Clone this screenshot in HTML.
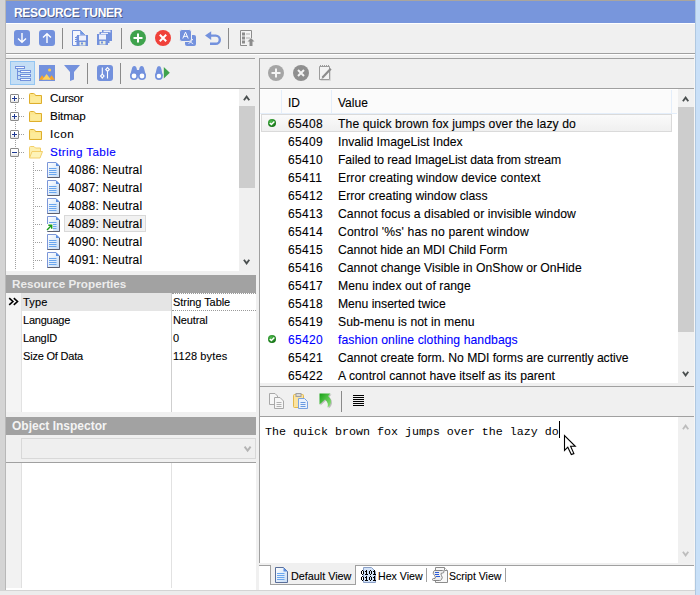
<!DOCTYPE html>
<html><head><meta charset="utf-8">
<style>
*{margin:0;padding:0;box-sizing:border-box}
html,body{width:700px;height:595px;overflow:hidden;background:#f0f0f0;font-family:"Liberation Sans",sans-serif;font-size:12px;color:#000}
.a{position:absolute}
.t{position:absolute;white-space:nowrap;line-height:1;-webkit-text-stroke:0.1px currentColor}
svg{position:absolute;overflow:visible}
</style></head><body>

<!-- frame -->
<div class="a" style="left:0;top:0;width:700px;height:1px;background:#aaa59d"></div>
<div class="a" style="left:0;top:0;width:5px;height:590px;background:#d4d4d4"></div>
<div class="a" style="left:5px;top:0;width:1px;height:590px;background:#b8b8b8"></div>
<div class="a" style="left:695px;top:0;width:5px;height:595px;background:#c9e0f8"></div>
<div class="a" style="left:695px;top:0;width:1px;height:595px;background:#b0c8e0"></div>

<!-- title bar -->
<div class="a" style="left:6px;top:1px;width:689px;height:22px;background:#7896dc"></div>
<div class="a" style="left:6px;top:23px;width:689px;height:1px;background:#fff"></div>
<div class="t" style="left:14px;top:7px;font-weight:bold;-webkit-text-stroke:0;font-size:12px;letter-spacing:-0.33px;color:#fff;text-shadow:1px 1px 0 rgba(40,40,60,.55)">RESOURCE TUNER</div>

<!-- main toolbar lines -->
<div class="a" style="left:6px;top:53px;width:689px;height:1px;background:#a0a0a0"></div>
<div class="a" style="left:6px;top:54px;width:689px;height:1px;background:#fff"></div>
<div class="a" style="left:6px;top:58px;width:249px;height:1px;background:#a0a0a0"></div>
<div class="a" style="left:259px;top:58px;width:436px;height:1px;background:#a0a0a0"></div>


<!-- main toolbar icons -->
<svg style="left:14px;top:30px" width="16" height="16" viewBox="0 0 16 16"><rect x="0" y="0" width="16" height="16" rx="3" fill="#7391dd"/><path d="M8 3V12M4 8.5L8 12.3L12 8.5" stroke="#fff" stroke-width="1.4" fill="none"/></svg>
<svg style="left:39px;top:30px" width="16" height="16" viewBox="0 0 16 16"><rect x="0" y="0" width="16" height="16" rx="3" fill="#7391dd"/><path d="M8 13V4M4 7.5L8 3.7L12 7.5" stroke="#fff" stroke-width="1.4" fill="none"/></svg>
<div class="a" style="left:62px;top:28px;width:1px;height:21px;background:#8a8a8a"></div>
<svg style="left:72px;top:30px" width="16" height="16" viewBox="0 0 16 16">
 <path d="M0.5 0.5H8.5L12.5 4.5V6H5V15.5H0.5Z" fill="#f4f6fd" stroke="#7391dd"/>
 <path d="M8.5 0.5V4.5H12.5Z" fill="#6f9be6" stroke="#7391dd" stroke-width=".6"/>
 <path d="M3 7.5H5M3 9.5H5M3 11.5H5" stroke="#7391dd"/>
 <rect x="5" y="5" width="11" height="11" fill="#7391dd"/>
 <rect x="7" y="5.5" width="7" height="5" fill="#eef0fb"/>
 <rect x="7.5" y="12" width="6" height="3.5" fill="#e8ece0"/>
 <rect x="9" y="12.5" width="2" height="2" fill="#7391dd"/>
</svg>
<svg style="left:97px;top:30px" width="16" height="16" viewBox="0 0 16 16">
 <rect x="5" y="0" width="10" height="11" fill="#7391dd"/>
 <rect x="6.5" y="0.5" width="7" height="2" fill="#eef0fb"/>
 <rect x="2.5" y="2" width="10" height="11" fill="#7391dd"/>
 <rect x="4" y="2.8" width="7" height="2" fill="#eef0fb"/>
 <rect x="0" y="4" width="11" height="11" fill="#7391dd"/>
 <rect x="2" y="4.5" width="7" height="5" fill="#eef0fb"/>
 <rect x="2.5" y="11" width="6" height="3.5" fill="#e8ece0"/>
 <rect x="4" y="11.5" width="2" height="2" fill="#7391dd"/>
</svg>
<div class="a" style="left:121px;top:28px;width:1px;height:21px;background:#8a8a8a"></div>
<svg style="left:130px;top:30px" width="16" height="16" viewBox="0 0 16 16"><circle cx="8" cy="8" r="8" fill="#3fa34d"/><path d="M8 3.5V12.5M3.5 8H12.5" stroke="#fff" stroke-width="2"/></svg>
<svg style="left:155px;top:30px" width="16" height="16" viewBox="0 0 16 16"><circle cx="8" cy="8" r="8" fill="#f0413a"/><path d="M4.8 4.8L11.2 11.2M11.2 4.8L4.8 11.2" stroke="#fff" stroke-width="2"/></svg>
<svg style="left:180px;top:30px" width="16" height="16" viewBox="0 0 16 16">
 <rect x="5" y="5" width="11" height="11" rx="2" fill="#7391dd"/>
 <path d="M8.5 9.5H13M10.8 8.5V9.5M12.2 9.5Q11.5 12.5 8.5 13.5M9.8 11Q11 13 13.2 13.8" stroke="#eef0fb" stroke-width=".9" fill="none"/>
 <rect x="-0.5" y="-0.5" width="12" height="12" rx="2.5" fill="#7391dd" stroke="#f0f0f0" stroke-width="1"/>
 <path d="M2.8 8.5L5.5 2.2L8.2 8.5M3.8 6.3H7.2" stroke="#fff" stroke-width="1" fill="none"/>
</svg>
<svg style="left:205px;top:31px" width="16" height="15" viewBox="0 0 16 15">
 <path d="M5 4.6H10.7A4.1 4.1 0 0 1 10.7 12.8H5" stroke="#7391dd" stroke-width="2.4" fill="none"/>
 <path d="M0 4.6L6.2 0.2V9Z" fill="#7391dd"/>
</svg>
<div class="a" style="left:228px;top:28px;width:1px;height:21px;background:#8a8a8a"></div>
<svg style="left:240px;top:30px" width="15" height="16" viewBox="0 0 15 16">
 <path d="M0.5 0.5H11.5V8M7 15.5H0.5V0.5" stroke="#8c8c8c" fill="#f4f4f4"/>
 <rect x="2" y="2.5" width="3" height="3" fill="#8c8c8c"/>
 <rect x="2" y="6.5" width="3" height="3" fill="#8c8c8c"/>
 <rect x="2" y="10.5" width="3" height="3" fill="#8c8c8c"/>
 <path d="M6 4H10M6 8H10" stroke="#b0b0b0"/>
 <path d="M7.5 11.5L11 8L14.5 11.5H12.5V16H9.5V11.5Z" fill="#8c8c8c"/>
</svg>

<!-- LEFT PANEL toolbar 2 -->
<div class="a" style="left:10px;top:61px;width:25px;height:24px;background:#c4def5;border:1px solid #94c6f2"></div>
<svg style="left:15px;top:65px" width="16" height="16" viewBox="0 0 16 16">
 <rect x="0.5" y="1.5" width="9" height="2" fill="#f4f8ff" stroke="#7391dd"/>
 <path d="M2.5 4V14.5M2.5 6.5H5M2.5 10.5H5M2.5 14.5H5" stroke="#7391dd"/>
 <rect x="5.5" y="5.5" width="10" height="2" fill="#f4f8ff" stroke="#7391dd"/>
 <rect x="5.5" y="9.5" width="10" height="2" fill="#f4f8ff" stroke="#7391dd"/>
 <rect x="5.5" y="13.5" width="10" height="2" fill="#f4f8ff" stroke="#7391dd"/>
</svg>
<svg style="left:39px;top:65px" width="16" height="16" viewBox="0 0 16 16">
 <rect x="0" y="0" width="16" height="16" fill="#7391dd"/>
 <circle cx="10.6" cy="5" r="1.6" fill="#fdc94a"/>
 <path d="M0 14.8L3 10.2L6.5 14.8Z M9 14.8L12.6 10.2L16 14.8Z" fill="#f6a42a"/>
 <path d="M3.2 14.8L7.6 9L12 14.8Z" fill="#fdd25c"/>
</svg>
<svg style="left:64px;top:65px" width="16" height="16" viewBox="0 0 16 16">
 <path d="M0 0H16L10 7V14.5L6 16V7Z" fill="#7391dd"/>
</svg>
<div class="a" style="left:87px;top:63px;width:1px;height:21px;background:#8a8a8a"></div>
<svg style="left:97px;top:65px" width="16" height="16" viewBox="0 0 16 16">
 <rect x="0" y="0" width="16" height="16" rx="3" fill="#7391dd"/>
 <path d="M5.3 2.5V9.2M5.3 12.8V13.5M10.5 2.5V2.8M10.5 6.3V13.5" stroke="#fff" stroke-width="1.1"/>
 <path d="M5.3 9.1L7.1 11L5.3 12.9L3.5 11Z" fill="none" stroke="#fff" stroke-width="1.1"/>
 <path d="M10.5 2.6L12.3 4.5L10.5 6.4L8.7 4.5Z" fill="none" stroke="#fff" stroke-width="1.1"/>
</svg>
<div class="a" style="left:120px;top:63px;width:1px;height:21px;background:#8a8a8a"></div>
<svg style="left:130px;top:65px" width="16" height="16" viewBox="0 0 16 16">
 <path d="M1.8 4Q2.3 1 4.3 1Q6.3 1 6.8 4L8 11H0Z" fill="#7391dd"/>
 <path d="M14.2 4Q13.7 1 11.7 1Q9.7 1 9.2 4L8 11H16Z" fill="#7391dd"/>
 <rect x="6" y="5" width="4" height="6" fill="#7391dd"/>
 <circle cx="4" cy="11" r="4" fill="#7391dd"/><circle cx="12" cy="11" r="4" fill="#7391dd"/>
 <circle cx="4" cy="11" r="2.4" fill="#fff"/><circle cx="12" cy="11" r="2.4" fill="#fff"/>
</svg>
<svg style="left:155px;top:65px" width="16" height="16" viewBox="0 0 16 16">
 <path d="M1.6 4Q2.1 1 4 1Q5.9 1 6.4 4L7.8 11H0Z" fill="#7391dd"/>
 <circle cx="3.9" cy="11" r="3.9" fill="#7391dd"/>
 <circle cx="3.9" cy="11" r="2.3" fill="#fff"/>
 <path d="M8.8 2L14.8 7.7L8.8 13.4Z" fill="#3fa34d"/>
</svg>
<div class="a" style="left:6px;top:88px;width:249px;height:1px;background:#a0a0a0"></div>

<!-- TREE -->
<div class="a" style="left:6px;top:89px;width:249px;height:182px;background:#fff;overflow:hidden" id="tree"><div class="a" style="left:-6px;top:-89px;width:700px;height:595px"><div class="a" style="left:15px;top:104px;width:1px;height:1px;background:#a0a0a0"></div><div class="a" style="left:15px;top:106px;width:1px;height:1px;background:#a0a0a0"></div><div class="a" style="left:15px;top:108px;width:1px;height:1px;background:#a0a0a0"></div><div class="a" style="left:15px;top:110px;width:1px;height:1px;background:#a0a0a0"></div><div class="a" style="left:15px;top:112px;width:1px;height:1px;background:#a0a0a0"></div><div class="a" style="left:15px;top:114px;width:1px;height:1px;background:#a0a0a0"></div><div class="a" style="left:15px;top:116px;width:1px;height:1px;background:#a0a0a0"></div><div class="a" style="left:15px;top:118px;width:1px;height:1px;background:#a0a0a0"></div><div class="a" style="left:15px;top:120px;width:1px;height:1px;background:#a0a0a0"></div><div class="a" style="left:15px;top:122px;width:1px;height:1px;background:#a0a0a0"></div><div class="a" style="left:15px;top:124px;width:1px;height:1px;background:#a0a0a0"></div><div class="a" style="left:15px;top:126px;width:1px;height:1px;background:#a0a0a0"></div><div class="a" style="left:15px;top:128px;width:1px;height:1px;background:#a0a0a0"></div><div class="a" style="left:15px;top:130px;width:1px;height:1px;background:#a0a0a0"></div><div class="a" style="left:15px;top:132px;width:1px;height:1px;background:#a0a0a0"></div><div class="a" style="left:15px;top:134px;width:1px;height:1px;background:#a0a0a0"></div><div class="a" style="left:15px;top:136px;width:1px;height:1px;background:#a0a0a0"></div><div class="a" style="left:15px;top:138px;width:1px;height:1px;background:#a0a0a0"></div><div class="a" style="left:15px;top:140px;width:1px;height:1px;background:#a0a0a0"></div><div class="a" style="left:15px;top:142px;width:1px;height:1px;background:#a0a0a0"></div><div class="a" style="left:15px;top:144px;width:1px;height:1px;background:#a0a0a0"></div><div class="a" style="left:15px;top:146px;width:1px;height:1px;background:#a0a0a0"></div><div class="a" style="left:15px;top:148px;width:1px;height:1px;background:#a0a0a0"></div><div class="a" style="left:15px;top:150px;width:1px;height:1px;background:#a0a0a0"></div><div class="a" style="left:15px;top:152px;width:1px;height:1px;background:#a0a0a0"></div><div class="a" style="left:15px;top:154px;width:1px;height:1px;background:#a0a0a0"></div><div class="a" style="left:15px;top:156px;width:1px;height:1px;background:#a0a0a0"></div><div class="a" style="left:15px;top:158px;width:1px;height:1px;background:#a0a0a0"></div><div class="a" style="left:15px;top:160px;width:1px;height:1px;background:#a0a0a0"></div><div class="a" style="left:15px;top:162px;width:1px;height:1px;background:#a0a0a0"></div><div class="a" style="left:15px;top:164px;width:1px;height:1px;background:#a0a0a0"></div><div class="a" style="left:15px;top:166px;width:1px;height:1px;background:#a0a0a0"></div><div class="a" style="left:15px;top:168px;width:1px;height:1px;background:#a0a0a0"></div><div class="a" style="left:15px;top:170px;width:1px;height:1px;background:#a0a0a0"></div><div class="a" style="left:15px;top:172px;width:1px;height:1px;background:#a0a0a0"></div><div class="a" style="left:15px;top:174px;width:1px;height:1px;background:#a0a0a0"></div><div class="a" style="left:15px;top:176px;width:1px;height:1px;background:#a0a0a0"></div><div class="a" style="left:15px;top:178px;width:1px;height:1px;background:#a0a0a0"></div><div class="a" style="left:15px;top:180px;width:1px;height:1px;background:#a0a0a0"></div><div class="a" style="left:15px;top:182px;width:1px;height:1px;background:#a0a0a0"></div><div class="a" style="left:15px;top:184px;width:1px;height:1px;background:#a0a0a0"></div><div class="a" style="left:15px;top:186px;width:1px;height:1px;background:#a0a0a0"></div><div class="a" style="left:15px;top:188px;width:1px;height:1px;background:#a0a0a0"></div><div class="a" style="left:15px;top:190px;width:1px;height:1px;background:#a0a0a0"></div><div class="a" style="left:15px;top:192px;width:1px;height:1px;background:#a0a0a0"></div><div class="a" style="left:15px;top:194px;width:1px;height:1px;background:#a0a0a0"></div><div class="a" style="left:15px;top:196px;width:1px;height:1px;background:#a0a0a0"></div><div class="a" style="left:15px;top:198px;width:1px;height:1px;background:#a0a0a0"></div><div class="a" style="left:15px;top:200px;width:1px;height:1px;background:#a0a0a0"></div><div class="a" style="left:15px;top:202px;width:1px;height:1px;background:#a0a0a0"></div><div class="a" style="left:15px;top:204px;width:1px;height:1px;background:#a0a0a0"></div><div class="a" style="left:15px;top:206px;width:1px;height:1px;background:#a0a0a0"></div><div class="a" style="left:15px;top:208px;width:1px;height:1px;background:#a0a0a0"></div><div class="a" style="left:15px;top:210px;width:1px;height:1px;background:#a0a0a0"></div><div class="a" style="left:15px;top:212px;width:1px;height:1px;background:#a0a0a0"></div><div class="a" style="left:15px;top:214px;width:1px;height:1px;background:#a0a0a0"></div><div class="a" style="left:15px;top:216px;width:1px;height:1px;background:#a0a0a0"></div><div class="a" style="left:15px;top:218px;width:1px;height:1px;background:#a0a0a0"></div><div class="a" style="left:15px;top:220px;width:1px;height:1px;background:#a0a0a0"></div><div class="a" style="left:15px;top:222px;width:1px;height:1px;background:#a0a0a0"></div><div class="a" style="left:15px;top:224px;width:1px;height:1px;background:#a0a0a0"></div><div class="a" style="left:15px;top:226px;width:1px;height:1px;background:#a0a0a0"></div><div class="a" style="left:15px;top:228px;width:1px;height:1px;background:#a0a0a0"></div><div class="a" style="left:15px;top:230px;width:1px;height:1px;background:#a0a0a0"></div><div class="a" style="left:15px;top:232px;width:1px;height:1px;background:#a0a0a0"></div><div class="a" style="left:15px;top:234px;width:1px;height:1px;background:#a0a0a0"></div><div class="a" style="left:15px;top:236px;width:1px;height:1px;background:#a0a0a0"></div><div class="a" style="left:15px;top:238px;width:1px;height:1px;background:#a0a0a0"></div><div class="a" style="left:15px;top:240px;width:1px;height:1px;background:#a0a0a0"></div><div class="a" style="left:15px;top:242px;width:1px;height:1px;background:#a0a0a0"></div><div class="a" style="left:15px;top:244px;width:1px;height:1px;background:#a0a0a0"></div><div class="a" style="left:15px;top:246px;width:1px;height:1px;background:#a0a0a0"></div><div class="a" style="left:15px;top:248px;width:1px;height:1px;background:#a0a0a0"></div><div class="a" style="left:15px;top:250px;width:1px;height:1px;background:#a0a0a0"></div><div class="a" style="left:15px;top:252px;width:1px;height:1px;background:#a0a0a0"></div><div class="a" style="left:15px;top:254px;width:1px;height:1px;background:#a0a0a0"></div><div class="a" style="left:15px;top:256px;width:1px;height:1px;background:#a0a0a0"></div><div class="a" style="left:15px;top:258px;width:1px;height:1px;background:#a0a0a0"></div><div class="a" style="left:15px;top:260px;width:1px;height:1px;background:#a0a0a0"></div><div class="a" style="left:15px;top:262px;width:1px;height:1px;background:#a0a0a0"></div><div class="a" style="left:15px;top:264px;width:1px;height:1px;background:#a0a0a0"></div><div class="a" style="left:15px;top:266px;width:1px;height:1px;background:#a0a0a0"></div><div class="a" style="left:15px;top:268px;width:1px;height:1px;background:#a0a0a0"></div><div class="a" style="left:33px;top:162px;width:1px;height:1px;background:#a0a0a0"></div><div class="a" style="left:33px;top:164px;width:1px;height:1px;background:#a0a0a0"></div><div class="a" style="left:33px;top:166px;width:1px;height:1px;background:#a0a0a0"></div><div class="a" style="left:33px;top:168px;width:1px;height:1px;background:#a0a0a0"></div><div class="a" style="left:33px;top:170px;width:1px;height:1px;background:#a0a0a0"></div><div class="a" style="left:33px;top:172px;width:1px;height:1px;background:#a0a0a0"></div><div class="a" style="left:33px;top:174px;width:1px;height:1px;background:#a0a0a0"></div><div class="a" style="left:33px;top:176px;width:1px;height:1px;background:#a0a0a0"></div><div class="a" style="left:33px;top:178px;width:1px;height:1px;background:#a0a0a0"></div><div class="a" style="left:33px;top:180px;width:1px;height:1px;background:#a0a0a0"></div><div class="a" style="left:33px;top:182px;width:1px;height:1px;background:#a0a0a0"></div><div class="a" style="left:33px;top:184px;width:1px;height:1px;background:#a0a0a0"></div><div class="a" style="left:33px;top:186px;width:1px;height:1px;background:#a0a0a0"></div><div class="a" style="left:33px;top:188px;width:1px;height:1px;background:#a0a0a0"></div><div class="a" style="left:33px;top:190px;width:1px;height:1px;background:#a0a0a0"></div><div class="a" style="left:33px;top:192px;width:1px;height:1px;background:#a0a0a0"></div><div class="a" style="left:33px;top:194px;width:1px;height:1px;background:#a0a0a0"></div><div class="a" style="left:33px;top:196px;width:1px;height:1px;background:#a0a0a0"></div><div class="a" style="left:33px;top:198px;width:1px;height:1px;background:#a0a0a0"></div><div class="a" style="left:33px;top:200px;width:1px;height:1px;background:#a0a0a0"></div><div class="a" style="left:33px;top:202px;width:1px;height:1px;background:#a0a0a0"></div><div class="a" style="left:33px;top:204px;width:1px;height:1px;background:#a0a0a0"></div><div class="a" style="left:33px;top:206px;width:1px;height:1px;background:#a0a0a0"></div><div class="a" style="left:33px;top:208px;width:1px;height:1px;background:#a0a0a0"></div><div class="a" style="left:33px;top:210px;width:1px;height:1px;background:#a0a0a0"></div><div class="a" style="left:33px;top:212px;width:1px;height:1px;background:#a0a0a0"></div><div class="a" style="left:33px;top:214px;width:1px;height:1px;background:#a0a0a0"></div><div class="a" style="left:33px;top:216px;width:1px;height:1px;background:#a0a0a0"></div><div class="a" style="left:33px;top:218px;width:1px;height:1px;background:#a0a0a0"></div><div class="a" style="left:33px;top:220px;width:1px;height:1px;background:#a0a0a0"></div><div class="a" style="left:33px;top:222px;width:1px;height:1px;background:#a0a0a0"></div><div class="a" style="left:33px;top:224px;width:1px;height:1px;background:#a0a0a0"></div><div class="a" style="left:33px;top:226px;width:1px;height:1px;background:#a0a0a0"></div><div class="a" style="left:33px;top:228px;width:1px;height:1px;background:#a0a0a0"></div><div class="a" style="left:33px;top:230px;width:1px;height:1px;background:#a0a0a0"></div><div class="a" style="left:33px;top:232px;width:1px;height:1px;background:#a0a0a0"></div><div class="a" style="left:33px;top:234px;width:1px;height:1px;background:#a0a0a0"></div><div class="a" style="left:33px;top:236px;width:1px;height:1px;background:#a0a0a0"></div><div class="a" style="left:33px;top:238px;width:1px;height:1px;background:#a0a0a0"></div><div class="a" style="left:33px;top:240px;width:1px;height:1px;background:#a0a0a0"></div><div class="a" style="left:33px;top:242px;width:1px;height:1px;background:#a0a0a0"></div><div class="a" style="left:33px;top:244px;width:1px;height:1px;background:#a0a0a0"></div><div class="a" style="left:33px;top:246px;width:1px;height:1px;background:#a0a0a0"></div><div class="a" style="left:33px;top:248px;width:1px;height:1px;background:#a0a0a0"></div><div class="a" style="left:33px;top:250px;width:1px;height:1px;background:#a0a0a0"></div><div class="a" style="left:33px;top:252px;width:1px;height:1px;background:#a0a0a0"></div><div class="a" style="left:33px;top:254px;width:1px;height:1px;background:#a0a0a0"></div><div class="a" style="left:33px;top:256px;width:1px;height:1px;background:#a0a0a0"></div><div class="a" style="left:33px;top:258px;width:1px;height:1px;background:#a0a0a0"></div><div class="a" style="left:33px;top:260px;width:1px;height:1px;background:#a0a0a0"></div><div class="a" style="left:33px;top:262px;width:1px;height:1px;background:#a0a0a0"></div><div class="a" style="left:33px;top:264px;width:1px;height:1px;background:#a0a0a0"></div><div class="a" style="left:33px;top:266px;width:1px;height:1px;background:#a0a0a0"></div><div class="a" style="left:33px;top:268px;width:1px;height:1px;background:#a0a0a0"></div><div class="a" style="left:10px;top:94px;width:9px;height:9px;border:1px solid #8a8a8a;border-radius:1px;background:linear-gradient(#fff 55%,#e2e2e2)"></div><div class="a" style="left:12px;top:98px;width:5px;height:1px;background:#1f3a93"></div><div class="a" style="left:14px;top:96px;width:1px;height:5px;background:#1f3a93"></div><div class="a" style="left:19px;top:98px;width:1px;height:1px;background:#a0a0a0"></div><div class="a" style="left:21px;top:98px;width:1px;height:1px;background:#a0a0a0"></div><div class="a" style="left:23px;top:98px;width:1px;height:1px;background:#a0a0a0"></div><svg style="left:29px;top:93px" width="13" height="11" viewBox="0 0 13 11"><path d="M0.5 10.5V1.5Q0.5 0.5 1.5 0.5H4.5Q5.5 0.5 6 1.5L6.5 2.5H12.5V10.5Z" fill="#fde68c" stroke="#deae2c"/><path d="M1.5 3.5H11.5V9.5H1.5Z" fill="#feefa8" opacity=".5"/></svg><div class="t" style="left:50px;top:92px;font-size:11.7px;letter-spacing:-0.28px;color:#000">Cursor</div><div class="a" style="left:10px;top:112px;width:9px;height:9px;border:1px solid #8a8a8a;border-radius:1px;background:linear-gradient(#fff 55%,#e2e2e2)"></div><div class="a" style="left:12px;top:116px;width:5px;height:1px;background:#1f3a93"></div><div class="a" style="left:14px;top:114px;width:1px;height:5px;background:#1f3a93"></div><div class="a" style="left:19px;top:116px;width:1px;height:1px;background:#a0a0a0"></div><div class="a" style="left:21px;top:116px;width:1px;height:1px;background:#a0a0a0"></div><div class="a" style="left:23px;top:116px;width:1px;height:1px;background:#a0a0a0"></div><svg style="left:29px;top:111px" width="13" height="11" viewBox="0 0 13 11"><path d="M0.5 10.5V1.5Q0.5 0.5 1.5 0.5H4.5Q5.5 0.5 6 1.5L6.5 2.5H12.5V10.5Z" fill="#fde68c" stroke="#deae2c"/><path d="M1.5 3.5H11.5V9.5H1.5Z" fill="#feefa8" opacity=".5"/></svg><div class="t" style="left:50px;top:110px;font-size:11.7px;letter-spacing:-0.14px;color:#000">Bitmap</div><div class="a" style="left:10px;top:130px;width:9px;height:9px;border:1px solid #8a8a8a;border-radius:1px;background:linear-gradient(#fff 55%,#e2e2e2)"></div><div class="a" style="left:12px;top:134px;width:5px;height:1px;background:#1f3a93"></div><div class="a" style="left:14px;top:132px;width:1px;height:5px;background:#1f3a93"></div><div class="a" style="left:19px;top:134px;width:1px;height:1px;background:#a0a0a0"></div><div class="a" style="left:21px;top:134px;width:1px;height:1px;background:#a0a0a0"></div><div class="a" style="left:23px;top:134px;width:1px;height:1px;background:#a0a0a0"></div><svg style="left:29px;top:129px" width="13" height="11" viewBox="0 0 13 11"><path d="M0.5 10.5V1.5Q0.5 0.5 1.5 0.5H4.5Q5.5 0.5 6 1.5L6.5 2.5H12.5V10.5Z" fill="#fde68c" stroke="#deae2c"/><path d="M1.5 3.5H11.5V9.5H1.5Z" fill="#feefa8" opacity=".5"/></svg><div class="t" style="left:50px;top:128px;font-size:11.7px;letter-spacing:0.53px;color:#000">Icon</div><div class="a" style="left:10px;top:148px;width:9px;height:9px;border:1px solid #8a8a8a;border-radius:1px;background:linear-gradient(#fff 55%,#e2e2e2)"></div><div class="a" style="left:12px;top:152px;width:5px;height:1px;background:#1f3a93"></div><div class="a" style="left:19px;top:152px;width:1px;height:1px;background:#a0a0a0"></div><div class="a" style="left:21px;top:152px;width:1px;height:1px;background:#a0a0a0"></div><div class="a" style="left:23px;top:152px;width:1px;height:1px;background:#a0a0a0"></div><svg style="left:29px;top:146px" width="14" height="13" viewBox="0 0 14 13"><path d="M0.5 12V1.5Q0.5 0.5 1.5 0.5H5L6.5 2H11.5V5" fill="#fdf0b0" stroke="#f3cf6a"/><path d="M0.5 12L3 5.5H13.5L11 12Z" fill="#fdf3b8" stroke="#f3cf6a"/></svg><div class="t" style="left:50px;top:146px;font-size:11.7px;letter-spacing:0.38px;color:#0000ff">String Table</div><div class="a" style="left:35px;top:170px;width:1px;height:1px;background:#a0a0a0"></div><div class="a" style="left:37px;top:170px;width:1px;height:1px;background:#a0a0a0"></div><div class="a" style="left:39px;top:170px;width:1px;height:1px;background:#a0a0a0"></div><div class="a" style="left:41px;top:170px;width:1px;height:1px;background:#a0a0a0"></div><svg style="left:47px;top:162px" width="14" height="16" viewBox="0 0 14 16"><defs><linearGradient id="dg4086" x1="0" y1="0" x2="1" y2="1"><stop offset="0" stop-color="#ffffff"/><stop offset="1" stop-color="#c6dcf6"/></linearGradient></defs><path d="M0.5 0.5H9L12.5 4V15.5H0.5Z" fill="url(#dg4086)" stroke="#7b96d8"/><path d="M12.5 4V15.5H0.5" stroke="#5c5f6e" fill="none"/><path d="M9 0.5V4H12.5Z" fill="#5b8ee0"/><path d="M2 6.5H9.5M2 8.5H9.5M2 10.5H9.5M2 12.5H9.5" stroke="#6aa6ee" stroke-width="1"/></svg><div class="t" style="left:68px;top:164px;font-size:12px;letter-spacing:0.17px">4086: Neutral</div><div class="a" style="left:35px;top:188px;width:1px;height:1px;background:#a0a0a0"></div><div class="a" style="left:37px;top:188px;width:1px;height:1px;background:#a0a0a0"></div><div class="a" style="left:39px;top:188px;width:1px;height:1px;background:#a0a0a0"></div><div class="a" style="left:41px;top:188px;width:1px;height:1px;background:#a0a0a0"></div><svg style="left:47px;top:180px" width="14" height="16" viewBox="0 0 14 16"><defs><linearGradient id="dg4087" x1="0" y1="0" x2="1" y2="1"><stop offset="0" stop-color="#ffffff"/><stop offset="1" stop-color="#c6dcf6"/></linearGradient></defs><path d="M0.5 0.5H9L12.5 4V15.5H0.5Z" fill="url(#dg4087)" stroke="#7b96d8"/><path d="M12.5 4V15.5H0.5" stroke="#5c5f6e" fill="none"/><path d="M9 0.5V4H12.5Z" fill="#5b8ee0"/><path d="M2 6.5H9.5M2 8.5H9.5M2 10.5H9.5M2 12.5H9.5" stroke="#6aa6ee" stroke-width="1"/></svg><div class="t" style="left:68px;top:182px;font-size:12px;letter-spacing:0.17px">4087: Neutral</div><div class="a" style="left:35px;top:206px;width:1px;height:1px;background:#a0a0a0"></div><div class="a" style="left:37px;top:206px;width:1px;height:1px;background:#a0a0a0"></div><div class="a" style="left:39px;top:206px;width:1px;height:1px;background:#a0a0a0"></div><div class="a" style="left:41px;top:206px;width:1px;height:1px;background:#a0a0a0"></div><svg style="left:47px;top:198px" width="14" height="16" viewBox="0 0 14 16"><defs><linearGradient id="dg4088" x1="0" y1="0" x2="1" y2="1"><stop offset="0" stop-color="#ffffff"/><stop offset="1" stop-color="#c6dcf6"/></linearGradient></defs><path d="M0.5 0.5H9L12.5 4V15.5H0.5Z" fill="url(#dg4088)" stroke="#7b96d8"/><path d="M12.5 4V15.5H0.5" stroke="#5c5f6e" fill="none"/><path d="M9 0.5V4H12.5Z" fill="#5b8ee0"/><path d="M2 6.5H9.5M2 8.5H9.5M2 10.5H9.5M2 12.5H9.5" stroke="#6aa6ee" stroke-width="1"/></svg><div class="t" style="left:68px;top:200px;font-size:12px;letter-spacing:0.17px">4088: Neutral</div><div class="a" style="left:35px;top:224px;width:1px;height:1px;background:#a0a0a0"></div><div class="a" style="left:37px;top:224px;width:1px;height:1px;background:#a0a0a0"></div><div class="a" style="left:39px;top:224px;width:1px;height:1px;background:#a0a0a0"></div><div class="a" style="left:41px;top:224px;width:1px;height:1px;background:#a0a0a0"></div><svg style="left:47px;top:216px" width="14" height="16" viewBox="0 0 14 16"><defs><linearGradient id="dg4089" x1="0" y1="0" x2="1" y2="1"><stop offset="0" stop-color="#ffffff"/><stop offset="1" stop-color="#c6dcf6"/></linearGradient></defs><path d="M0.5 0.5H9L12.5 4V15.5H0.5Z" fill="url(#dg4089)" stroke="#7b96d8"/><path d="M12.5 4V15.5H0.5" stroke="#5c5f6e" fill="none"/><path d="M9 0.5V4H12.5Z" fill="#5b8ee0"/><path d="M2 6.5H9.5M2 8.5H9.5M2 10.5H9.5M2 12.5H9.5" stroke="#6aa6ee" stroke-width="1"/></svg><div class="a" style="left:64px;top:215px;width:82px;height:17px;background:#f2f2f2;border:1px solid #d9d9d9"></div><svg style="left:46px;top:224px" width="7" height="7" viewBox="0 0 7 7"><rect x="0" y="0" width="7" height="7" fill="#fff"/><path d="M1 6L5.2 1.8M2.3 1.3H5.7V4.7" stroke="#1a9a1a" stroke-width="1.4" fill="none"/></svg><div class="t" style="left:68px;top:218px;font-size:12px;letter-spacing:0.17px">4089: Neutral</div><div class="a" style="left:35px;top:242px;width:1px;height:1px;background:#a0a0a0"></div><div class="a" style="left:37px;top:242px;width:1px;height:1px;background:#a0a0a0"></div><div class="a" style="left:39px;top:242px;width:1px;height:1px;background:#a0a0a0"></div><div class="a" style="left:41px;top:242px;width:1px;height:1px;background:#a0a0a0"></div><svg style="left:47px;top:234px" width="14" height="16" viewBox="0 0 14 16"><defs><linearGradient id="dg4090" x1="0" y1="0" x2="1" y2="1"><stop offset="0" stop-color="#ffffff"/><stop offset="1" stop-color="#c6dcf6"/></linearGradient></defs><path d="M0.5 0.5H9L12.5 4V15.5H0.5Z" fill="url(#dg4090)" stroke="#7b96d8"/><path d="M12.5 4V15.5H0.5" stroke="#5c5f6e" fill="none"/><path d="M9 0.5V4H12.5Z" fill="#5b8ee0"/><path d="M2 6.5H9.5M2 8.5H9.5M2 10.5H9.5M2 12.5H9.5" stroke="#6aa6ee" stroke-width="1"/></svg><div class="t" style="left:68px;top:236px;font-size:12px;letter-spacing:0.17px">4090: Neutral</div><div class="a" style="left:35px;top:260px;width:1px;height:1px;background:#a0a0a0"></div><div class="a" style="left:37px;top:260px;width:1px;height:1px;background:#a0a0a0"></div><div class="a" style="left:39px;top:260px;width:1px;height:1px;background:#a0a0a0"></div><div class="a" style="left:41px;top:260px;width:1px;height:1px;background:#a0a0a0"></div><svg style="left:47px;top:252px" width="14" height="16" viewBox="0 0 14 16"><defs><linearGradient id="dg4091" x1="0" y1="0" x2="1" y2="1"><stop offset="0" stop-color="#ffffff"/><stop offset="1" stop-color="#c6dcf6"/></linearGradient></defs><path d="M0.5 0.5H9L12.5 4V15.5H0.5Z" fill="url(#dg4091)" stroke="#7b96d8"/><path d="M12.5 4V15.5H0.5" stroke="#5c5f6e" fill="none"/><path d="M9 0.5V4H12.5Z" fill="#5b8ee0"/><path d="M2 6.5H9.5M2 8.5H9.5M2 10.5H9.5M2 12.5H9.5" stroke="#6aa6ee" stroke-width="1"/></svg><div class="t" style="left:68px;top:254px;font-size:12px;letter-spacing:0.17px">4091: Neutral</div></div></div>
<div class="a" style="left:239px;top:89px;width:16px;height:182px;background:#f0f0f0"></div>
<div class="a" style="left:239px;top:106px;width:16px;height:82px;background:#cdcdcd"></div>
<svg style="left:243px;top:95px" width="8" height="6" viewBox="0 0 8 6"><path d="M0.9 5.2L3.6 1.6L6.3 5.2" stroke="#4a4f4f" stroke-width="1.8" fill="none"/></svg>
<svg style="left:243px;top:259px" width="8" height="6" viewBox="0 0 8 6"><path d="M0.9 0.8L3.6 4.4L6.3 0.8" stroke="#4a4f4f" stroke-width="1.8" fill="none"/></svg>


<!-- gap + Resource Properties -->
<div class="a" style="left:6px;top:275px;width:250px;height:18px;background:#a2a2a2"></div>
<div class="t" style="left:12px;top:278px;font-weight:bold;-webkit-text-stroke:0;font-size:11.7px;color:#ececec">Resource Properties</div>
<div class="a" style="left:6px;top:293px;width:250px;height:119px;background:#fff"></div>
<div class="a" style="left:6px;top:293px;width:15px;height:119px;background:#f4f4f4"></div><div class="a" style="left:21px;top:293px;width:1px;height:119px;background:#e2e2e2"></div>
<div class="a" style="left:22px;top:293px;width:149px;height:18px;background:#e5e5e5"></div>
<div class="a" style="left:171px;top:293px;width:1px;height:119px;background:#cfcfcf"></div>
<div class="a" style="left:172px;top:310px;width:84px;height:1px;border-top:1px dotted #9a9a9a"></div>
<div class="a" style="left:172px;top:293px;width:84px;height:1px;border-top:1px dotted #9a9a9a"></div>
<svg style="left:8px;top:297px" width="11" height="9" viewBox="0 0 11 9"><path d="M1.2 1.2L4.9 4.5L1.2 7.8M5.8 1.2L9.5 4.5L5.8 7.8" stroke="#000" stroke-width="1.6" fill="none"/></svg>
<div class="t" style="left:23px;top:297px;font-size:11px;letter-spacing:0.2px">Type</div>
<div class="t" style="left:173px;top:297px;font-size:11px;letter-spacing:-0.06px">String Table</div>
<div class="t" style="left:23px;top:315px;font-size:11px;letter-spacing:-0.23px">Language</div>
<div class="t" style="left:173px;top:315px;font-size:11px;letter-spacing:-0.12px">Neutral</div>
<div class="t" style="left:23px;top:333px;font-size:11px;letter-spacing:-0.26px">LangID</div>
<div class="t" style="left:173px;top:333px;font-size:11px;letter-spacing:0px">0</div>
<div class="t" style="left:23px;top:351px;font-size:11px;letter-spacing:-0.2px">Size Of Data</div>
<div class="t" style="left:173px;top:351px;font-size:11px;letter-spacing:0.13px">1128 bytes</div>

<!-- Object Inspector -->
<div class="a" style="left:6px;top:417px;width:250px;height:18px;background:#a2a2a2"></div>
<div class="t" style="left:12px;top:420px;font-weight:bold;-webkit-text-stroke:0;font-size:12px;color:#f4f4f4">Object Inspector</div>
<div class="a" style="left:21px;top:438px;width:235px;height:21px;background:#efefef;border:1px solid #d8d8d8"></div>
<svg style="left:244px;top:446px" width="8" height="6" viewBox="0 0 8 6"><path d="M0.6 0.6L3.6 4.6L6.6 0.6" stroke="#b4b4b4" stroke-width="1.9" fill="none"/></svg>
<div class="a" style="left:6px;top:462px;width:250px;height:1px;background:#a0a0a0"></div>
<div class="a" style="left:6px;top:463px;width:250px;height:127px;background:#fff"></div>
<div class="a" style="left:6px;top:463px;width:15px;height:125px;background:#f2f2f2"></div>
<div class="a" style="left:21px;top:463px;width:1px;height:125px;background:#e0e0e0"></div>
<div class="a" style="left:171px;top:463px;width:1px;height:125px;background:#e2e2e2"></div>

<!-- left bottom edge -->
<div class="a" style="left:0px;top:590px;width:695px;height:1px;background:#d4d4d4"></div>
<div class="a" style="left:0px;top:591px;width:695px;height:4px;background:#ececec"></div>

<!-- RIGHT PANEL -->
<div class="a" style="left:259px;top:58px;width:1px;height:505px;background:#a0a0a0"></div>
<svg style="left:268px;top:65px" width="16" height="16" viewBox="0 0 16 16"><circle cx="8" cy="8" r="8" fill="#a5a5a5"/><path d="M8 3.5V12.5M3.5 8H12.5" stroke="#f4f4f4" stroke-width="2"/></svg>
<svg style="left:293px;top:65px" width="16" height="16" viewBox="0 0 16 16"><circle cx="8" cy="8" r="8" fill="#8f8f8f"/><path d="M5 5L11 11M11 5L5 11" stroke="#f4f4f4" stroke-width="2"/></svg>
<svg style="left:319px;top:65px" width="14" height="16" viewBox="0 0 14 16"><path d="M0.5 1.5H10.5V14.5H0.5Z" fill="#f3f3f3" stroke="#9c9c9c"/><path d="M1 0.5H10.5" stroke="#9c9c9c" stroke-dasharray="1 1"/><path d="M11.5 3.5V15.5H1.5" stroke="#d8d8d8" fill="none"/><path d="M3.5 12.5L11.8 3.8" stroke="#8c8c8c" stroke-width="2.2"/><path d="M2.5 14L3.2 11.8L4.4 13Z" fill="#8c8c8c"/></svg>
<div class="a" style="left:260px;top:88px;width:435px;height:1px;background:#a0a0a0"></div>
<div class="a" style="left:260px;top:89px;width:418px;height:294px;background:#fff"></div>
<div class="a" style="left:260px;top:90px;width:418px;height:23px;background:#fbfbfb"></div>
<div class="a" style="left:260px;top:113px;width:417px;height:1px;background:#e4eefa"></div>
<div class="a" style="left:281px;top:90px;width:1px;height:23px;background:#e4eefa"></div>
<div class="a" style="left:331px;top:90px;width:1px;height:23px;background:#e4eefa"></div>
<div class="a" style="left:671px;top:90px;width:1px;height:23px;background:#e4eefa"></div>
<div class="t" style="left:288px;top:97px;font-size:12px">ID</div>
<div class="t" style="left:338px;top:97px;font-size:12px">Value</div>
<div class="a" style="left:261px;top:114px;width:411px;height:18px;background:linear-gradient(#fafafa,#f0f0f0);border:1px solid #dadada"></div>
<!-- list scrollbar -->
<div class="a" style="left:678px;top:90px;width:16px;height:292px;background:#f0f0f0"></div>
<div class="a" style="left:678px;top:107px;width:16px;height:225px;background:#cdcdcd"></div>
<svg style="left:682px;top:96px" width="8" height="6" viewBox="0 0 8 6"><path d="M0.9 5.2L3.6 1.6L6.3 5.2" stroke="#4a4f4f" stroke-width="1.8" fill="none"/></svg>
<svg style="left:682px;top:371px" width="8" height="6" viewBox="0 0 8 6"><path d="M0.9 0.8L3.6 4.4L6.3 0.8" stroke="#4a4f4f" stroke-width="1.8" fill="none"/></svg>
<svg style="left:268px;top:119px" width="8" height="8" viewBox="0 0 8 8"><defs><radialGradient id="cg65408" cx=".4" cy=".35" r=".7"><stop offset="0" stop-color="#52c052"/><stop offset="1" stop-color="#0d6a0d"/></radialGradient></defs><circle cx="4" cy="4" r="4" fill="url(#cg65408)"/><path d="M1.8 3.9L3.4 5.6L6.4 2.4" stroke="#fff" stroke-width="1.4" fill="none"/></svg><div class="t" style="left:288px;top:118px;font-size:12px;letter-spacing:0.35px;color:#000">65408</div><div class="t" style="left:338px;top:118px;font-size:12.2px;letter-spacing:0.085px;color:#000">The quick brown fox jumps over the lazy do</div><div class="t" style="left:288px;top:136px;font-size:12px;letter-spacing:0.35px;color:#000">65409</div><div class="t" style="left:338px;top:136px;font-size:12.2px;letter-spacing:0px;color:#000">Invalid ImageList Index</div><div class="t" style="left:288px;top:154px;font-size:12px;letter-spacing:0.35px;color:#000">65410</div><div class="t" style="left:338px;top:154px;font-size:12.2px;letter-spacing:-0.08px;color:#000">Failed to read ImageList data from stream</div><div class="t" style="left:288px;top:172px;font-size:12px;letter-spacing:0.35px;color:#000">65411</div><div class="t" style="left:338px;top:172px;font-size:12.2px;letter-spacing:0.089px;color:#000">Error creating window device context</div><div class="t" style="left:288px;top:190px;font-size:12px;letter-spacing:0.35px;color:#000">65412</div><div class="t" style="left:338px;top:190px;font-size:12.2px;letter-spacing:0.02px;color:#000">Error creating window class</div><div class="t" style="left:288px;top:208px;font-size:12px;letter-spacing:0.35px;color:#000">65413</div><div class="t" style="left:338px;top:208px;font-size:12.2px;letter-spacing:0.05px;color:#000">Cannot focus a disabled or invisible window</div><div class="t" style="left:288px;top:226px;font-size:12px;letter-spacing:0.35px;color:#000">65414</div><div class="t" style="left:338px;top:226px;font-size:12.2px;letter-spacing:0.14px;color:#000">Control '%s' has no parent window</div><div class="t" style="left:288px;top:244px;font-size:12px;letter-spacing:0.35px;color:#000">65415</div><div class="t" style="left:338px;top:244px;font-size:12.2px;letter-spacing:-0.07px;color:#000">Cannot hide an MDI Child Form</div><div class="t" style="left:288px;top:262px;font-size:12px;letter-spacing:0.35px;color:#000">65416</div><div class="t" style="left:338px;top:262px;font-size:12.2px;letter-spacing:0px;color:#000">Cannot change Visible in OnShow or OnHide</div><div class="t" style="left:288px;top:280px;font-size:12px;letter-spacing:0.35px;color:#000">65417</div><div class="t" style="left:338px;top:280px;font-size:12.2px;letter-spacing:0.055px;color:#000">Menu index out of range</div><div class="t" style="left:288px;top:298px;font-size:12px;letter-spacing:0.35px;color:#000">65418</div><div class="t" style="left:338px;top:298px;font-size:12.2px;letter-spacing:-0.04px;color:#000">Menu inserted twice</div><div class="t" style="left:288px;top:316px;font-size:12px;letter-spacing:0.35px;color:#000">65419</div><div class="t" style="left:338px;top:316px;font-size:12.2px;letter-spacing:0.05px;color:#000">Sub-menu is not in menu</div><svg style="left:268px;top:335px" width="8" height="8" viewBox="0 0 8 8"><defs><radialGradient id="cg65420" cx=".4" cy=".35" r=".7"><stop offset="0" stop-color="#52c052"/><stop offset="1" stop-color="#0d6a0d"/></radialGradient></defs><circle cx="4" cy="4" r="4" fill="url(#cg65420)"/><path d="M1.8 3.9L3.4 5.6L6.4 2.4" stroke="#fff" stroke-width="1.4" fill="none"/></svg><div class="t" style="left:288px;top:334px;font-size:12px;letter-spacing:0.35px;color:#0000ff">65420</div><div class="t" style="left:338px;top:334px;font-size:12.2px;letter-spacing:0.07px;color:#0000ff">fashion online clothing handbags</div><div class="t" style="left:288px;top:352px;font-size:12px;letter-spacing:0.35px;color:#000">65421</div><div class="t" style="left:338px;top:352px;font-size:12.2px;letter-spacing:-0.04px;color:#000">Cannot create form. No MDI forms are currently active</div><div class="t" style="left:288px;top:370px;font-size:12px;letter-spacing:0.35px;color:#000">65422</div><div class="t" style="left:338px;top:370px;font-size:12.2px;letter-spacing:0.035px;color:#000">A control cannot have itself as its parent</div>
<!-- lower toolbar -->
<div class="a" style="left:260px;top:386px;width:435px;height:1px;background:#a0a0a0"></div>
<svg style="left:269px;top:393px" width="16" height="16" viewBox="0 0 16 16"><path d="M0.5 0.5H6L8.5 3V11.5H0.5Z" fill="#f6f6f6" stroke="#a8a8a8"/><path d="M5.5 4.5H11L14.5 8V15.5H5.5Z" fill="#f6f6f6" stroke="#a8a8a8"/><path d="M7.5 9.5H12.5M7.5 11.5H12.5M7.5 13.5H12.5" stroke="#b0b0b0"/></svg>
<svg style="left:293px;top:393px" width="15" height="16" viewBox="0 0 15 16"><rect x="0.5" y="1.5" width="10" height="13" rx="1" fill="#fbe3a0" stroke="#e2b84a"/><rect x="3" y="0.5" width="5" height="3" fill="#d9d9d9" stroke="#a0a0a0"/><path d="M5.5 5.5H11.5L14.5 8.5V15.5H5.5Z" fill="#eaf2fd" stroke="#7aa2e0"/><path d="M7.5 9.5H12.5M7.5 11.5H12.5M7.5 13.5H12.5" stroke="#6a9ae0"/></svg>
<svg style="left:319px;top:393px" width="15" height="16" viewBox="0 0 15 16"><defs><linearGradient id="ga" x1="0" y1="0" x2="1" y2="1"><stop offset="0" stop-color="#16a016"/><stop offset="1" stop-color="#90e47a"/></linearGradient></defs><path d="M1.5 1.5H12.5L10 4Q14 7 12.5 12Q11.5 14.5 9.5 15.5Q11 11 7 7.5L1.5 12.5Z" fill="#000" opacity=".22"/><path d="M0.5 0.5H11.5L9 3Q13 6 11.5 11Q10.5 13.5 8.5 14.5Q10 10 6 6.5L0.5 11.5Z" fill="url(#ga)"/></svg>
<div class="a" style="left:341px;top:391px;width:1px;height:21px;background:#8a8a8a"></div>
<svg style="left:353px;top:394px" width="11" height="12" viewBox="0 0 11 12"><path d="M0 1.5H11M0 3.5H11M0 5.5H11M0 7.5H11M0 9.5H11M0 11.5H11" stroke="#000" stroke-width="1.2"/></svg>
<div class="a" style="left:260px;top:416px;width:435px;height:1px;background:#a0a0a0"></div>
<!-- text area -->
<div class="a" style="left:260px;top:417px;width:418px;height:146px;background:#fff"></div>
<div class="a" style="left:678px;top:418px;width:16px;height:143px;background:#f0f0f0"></div>
<svg style="left:682px;top:424px" width="8" height="6" viewBox="0 0 8 6"><path d="M0.9 5.2L3.6 1.6L6.3 5.2" stroke="#bdbdbd" stroke-width="1.8" fill="none"/></svg>
<svg style="left:682px;top:551px" width="8" height="6" viewBox="0 0 8 6"><path d="M0.9 0.8L3.6 4.4L6.3 0.8" stroke="#bdbdbd" stroke-width="1.8" fill="none"/></svg>
<div class="t" style="left:265px;top:427px;font-family:'Liberation Mono',monospace;font-size:11.67px;-webkit-text-stroke:0">The quick brown fox jumps over the lazy do</div>
<div class="a" style="left:559px;top:421px;width:1px;height:17px;background:#000"></div>
<svg style="left:564px;top:435px" width="13" height="21" viewBox="0 0 13 21"><path d="M0.5 0.5V15.5L3.8 12.2L7.3 19.6L9.9 18.6L6.6 11.3H11.3Z" fill="#fff" stroke="#000" stroke-width="1.1" stroke-linejoin="miter"/></svg>
<!-- tabs -->
<div class="a" style="left:259px;top:565px;width:435px;height:1px;background:#a0a0a0"></div>
<div class="a" style="left:259px;top:566px;width:435px;height:24px;background:#fff"></div>
<div class="a" style="left:270px;top:565px;width:86px;height:20px;background:#f0f0f0;border:1px solid #a0a0a0;border-top:none"></div>
<svg style="left:275px;top:567px" width="13" height="16" viewBox="0 0 13 16"><defs><linearGradient id="tg1" x1="0" y1="0" x2="1" y2="1"><stop offset="0" stop-color="#fff"/><stop offset="1" stop-color="#c6dcf6"/></linearGradient></defs><path d="M0.5 0.5H8.5L12.5 4.5V15.5H0.5Z" fill="url(#tg1)" stroke="#5a6f9a"/><path d="M8.5 0.5V4.5H12.5Z" fill="#5b8ee0"/><path d="M2 6.5H9.5M2 8.5H9.5M2 10.5H9.5M2 12.5H9.5" stroke="#6aa6ee"/></svg>
<div class="t" style="left:291px;top:571px;font-size:10.8px">Default View</div>
<svg style="left:361px;top:567px" width="15" height="16" viewBox="0 0 15 16"><path d="M2.5 0.5H10.5L14.5 4.5V15.5H2.5Z" fill="#d3e3f8" stroke="#8aa0c8"/><g fill="#000" shape-rendering="crispEdges"><rect x="1" y="3" width="1" height="1"/><rect x="0" y="4" width="1" height="1"/><rect x="2" y="4" width="1" height="1"/><rect x="0" y="5" width="1" height="1"/><rect x="2" y="5" width="1" height="1"/><rect x="0" y="6" width="1" height="1"/><rect x="2" y="6" width="1" height="1"/><rect x="1" y="7" width="1" height="1"/><rect x="5" y="3" width="1" height="1"/><rect x="4" y="4" width="1" height="1"/><rect x="5" y="4" width="1" height="1"/><rect x="5" y="5" width="1" height="1"/><rect x="5" y="6" width="1" height="1"/><rect x="4" y="7" width="1" height="1"/><rect x="5" y="7" width="1" height="1"/><rect x="6" y="7" width="1" height="1"/><rect x="9" y="3" width="1" height="1"/><rect x="8" y="4" width="1" height="1"/><rect x="10" y="4" width="1" height="1"/><rect x="8" y="5" width="1" height="1"/><rect x="10" y="5" width="1" height="1"/><rect x="8" y="6" width="1" height="1"/><rect x="10" y="6" width="1" height="1"/><rect x="9" y="7" width="1" height="1"/><rect x="13" y="3" width="1" height="1"/><rect x="12" y="4" width="1" height="1"/><rect x="13" y="4" width="1" height="1"/><rect x="13" y="5" width="1" height="1"/><rect x="13" y="6" width="1" height="1"/><rect x="12" y="7" width="1" height="1"/><rect x="13" y="7" width="1" height="1"/><rect x="14" y="7" width="1" height="1"/><rect x="1" y="9" width="1" height="1"/><rect x="0" y="10" width="1" height="1"/><rect x="2" y="10" width="1" height="1"/><rect x="0" y="11" width="1" height="1"/><rect x="2" y="11" width="1" height="1"/><rect x="0" y="12" width="1" height="1"/><rect x="2" y="12" width="1" height="1"/><rect x="1" y="13" width="1" height="1"/><rect x="5" y="9" width="1" height="1"/><rect x="4" y="10" width="1" height="1"/><rect x="5" y="10" width="1" height="1"/><rect x="5" y="11" width="1" height="1"/><rect x="5" y="12" width="1" height="1"/><rect x="4" y="13" width="1" height="1"/><rect x="5" y="13" width="1" height="1"/><rect x="6" y="13" width="1" height="1"/><rect x="9" y="9" width="1" height="1"/><rect x="8" y="10" width="1" height="1"/><rect x="10" y="10" width="1" height="1"/><rect x="8" y="11" width="1" height="1"/><rect x="10" y="11" width="1" height="1"/><rect x="8" y="12" width="1" height="1"/><rect x="10" y="12" width="1" height="1"/><rect x="9" y="13" width="1" height="1"/><rect x="13" y="9" width="1" height="1"/><rect x="12" y="10" width="1" height="1"/><rect x="13" y="10" width="1" height="1"/><rect x="13" y="11" width="1" height="1"/><rect x="13" y="12" width="1" height="1"/><rect x="12" y="13" width="1" height="1"/><rect x="13" y="13" width="1" height="1"/><rect x="14" y="13" width="1" height="1"/></g></svg>
<div class="t" style="left:378px;top:571px;font-size:10.6px">Hex View</div>
<div class="a" style="left:426px;top:568px;width:1px;height:14px;background:#a0a0a0"></div>
<svg style="left:432px;top:567px" width="16" height="16" viewBox="0 0 16 16"><path d="M3.5 0.5H12.5L15.5 3.5V15.5H3.5Z" fill="#f8f8f8" stroke="#8c8c8c"/><path d="M12.5 0.5V3.5H15.5" fill="#fff" stroke="#8c8c8c"/>
<path d="M3 3.5H10.5Q12 3.5 12 4.8Q12 6 10.5 6H9.5Q8.5 7 9.5 8.5Q11 10.5 9.5 12.5Q9 13.5 7.5 13.5H1.5Q0.5 13.5 0.5 12.5Q0.5 11.5 1.5 11.5H3Q4 10 2.5 8.5Q0.5 6.5 1.5 4.5Q2 3.5 3 3.5Z" fill="#eeeeee" stroke="#858585"/>
<path d="M3 5.5H7M3 7.5H7M4 9.5H8" stroke="#2a5ad8" stroke-width="1.1"/></svg>
<div class="t" style="left:449px;top:571px;font-size:10.5px">Script View</div>
<div class="a" style="left:505px;top:568px;width:1px;height:14px;background:#a0a0a0"></div>
<div class="a" style="left:694px;top:58px;width:1px;height:531px;background:#f6f6f6"></div>
</body></html>
